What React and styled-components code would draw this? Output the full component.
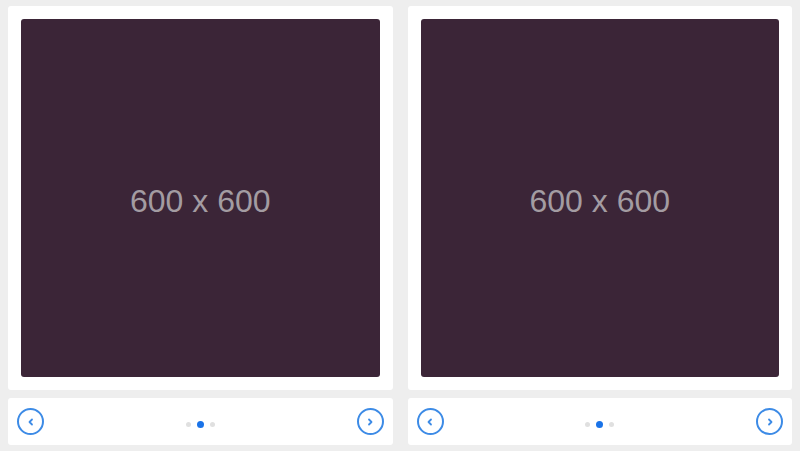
import React from 'react';
import styled, { createGlobalStyle } from 'styled-components';

const GlobalStyle = createGlobalStyle`
    html, body {
        margin: 0;
        padding: 0;
        background: #eeeeee;
        font-family: "Liberation Sans", Arial, sans-serif;
    }
`
const Page = styled.div`
    display: grid;
    grid-template-columns: 1fr 1fr;
    gap: 15px;
    padding: 6px 8px;
    width: 800px;
    height: 451px;
    box-sizing: border-box;
`
const Column = styled.div`
    display: flex;
    flex-direction: column;
    gap: 8px;
`
const Card = styled.div`
    background: #ffffff;
    border-radius: 3px;
    padding: 13px;
    height: 384px;
    box-sizing: border-box;
    display: flex;
`
const Placeholder = styled.div`
    flex: 1;
    background: #3b2537;
    border-radius: 3px;
    display: flex;
    align-items: center;
    justify-content: center;
    color: #a39ca2;
    font-size: 32px;
    padding-top: 7px;
`
const Controls = styled.div`
    background: #ffffff;
    border-radius: 3px;
    height: 47px;
    padding: 0 9px;
    display: flex;
    align-items: center;
    justify-content: space-between;
    box-sizing: border-box;
`
const RoundButton = styled.button`
    width: 27px;
    height: 27px;
    border-radius: 50%;
    border: 2px solid #3d8be6;
    background: transparent;
    display: flex;
    align-items: center;
    justify-content: center;
    padding: 0;
    color: #3d8be6;
    cursor: pointer;
`
const Dots = styled.div`
    display: flex;
    align-items: center;
    gap: 6px;
    margin-top: 6px;
`
const Dot = styled.span`
    width: ${props => props.active ? '7px' : '5px'};
    height: ${props => props.active ? '7px' : '5px'};
    border-radius: 50%;
    background: ${props => props.active ? '#1a73e8' : '#e0e0e0'};
`

const Chevron = ({ dir }) => (
    <svg width="10" height="10" viewBox="0 0 10 10">
        <path
            d={dir === 'left' ? 'M6 2.5 L3.5 5 L6 7.5' : 'M4 2.5 L6.5 5 L4 7.5'}
            fill="none"
            stroke="currentColor"
            strokeWidth="1.8"
            strokeLinecap="round"
            strokeLinejoin="round"
        />
    </svg>
)

const Slider = () => (
    <Column>
        <Card>
            <Placeholder>600 x 600</Placeholder>
        </Card>
        <Controls>
            <RoundButton aria-label="previous"><Chevron dir="left" /></RoundButton>
            <Dots>
                <Dot />
                <Dot active />
                <Dot />
            </Dots>
            <RoundButton aria-label="next"><Chevron dir="right" /></RoundButton>
        </Controls>
    </Column>
)

const App = () => (
    <>
        <GlobalStyle />
        <Page>
            <Slider />
            <Slider />
        </Page>
    </>
)

export default App;
